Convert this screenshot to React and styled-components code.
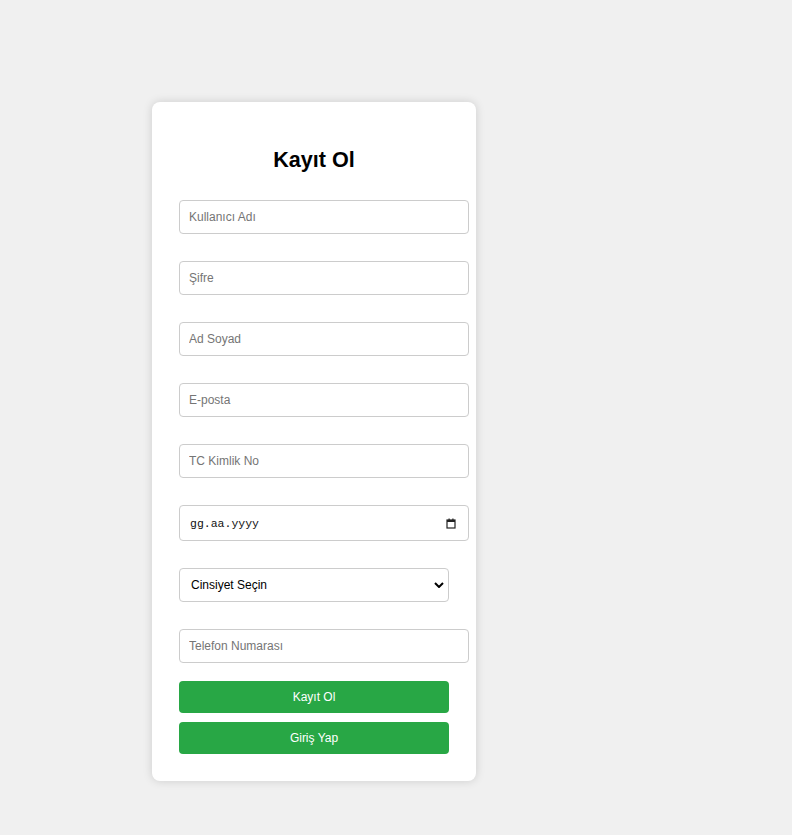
import styled, { createGlobalStyle } from 'styled-components';

const GlobalStyle = createGlobalStyle`
body{
  margin:0;
  background:#f0f0f0;
  font-family:"Liberation Sans", Arial, sans-serif;
}
`;

const Page = styled.div`
min-height:835px;
box-sizing:border-box;
padding:102px 0 0 152px;
`;

const Card = styled.form`
width:324px;
box-sizing:border-box;
padding:27px 27px 27px;
background:#fff;
border-radius:8px;
box-shadow:0 0 10px rgba(0,0,0,0.15);
display:flex;
flex-direction:column;
`;

const Title = styled.h2`
margin:18px 0 28px;
font-size:21.6px;
line-height:25px;
font-weight:bold;
text-align:center;
color:#000;
`;

const Field = styled.input`
width:290px;
height:34px;
box-sizing:border-box;
margin:0 0 ${p => p.last ? '18px' : '27px'};
padding:0 9px;
border:1px solid #ccc;
border-radius:4px;
font-family:"Liberation Sans", Arial, sans-serif;
font-size:12px;
color:#000;
outline:none;
&::placeholder{
  color:#757575;
}
`;

const DateBox = styled.div`
width:290px;
height:36px;
box-sizing:border-box;
margin-bottom:27px;
padding:0 12px 0 10px;
border:1px solid #ccc;
border-radius:4px;
display:flex;
align-items:center;
justify-content:space-between;
font-family:"Liberation Mono", monospace;
font-size:11.5px;
color:#111;
`;

const SelectWrap = styled.div`
position:relative;
width:270px;
margin-bottom:27px;
`;

const Select = styled.select`
width:270px;
height:34px;
box-sizing:border-box;
padding:0 11px;
border:1px solid #ccc;
border-radius:4px;
background:#fff;
appearance:none;
font-family:"Liberation Sans", Arial, sans-serif;
font-size:12px;
color:#000;
`;

const Chevron = styled.svg`
position:absolute;
right:5px;
top:14px;
pointer-events:none;
`;

const Button = styled.button`
width:270px;
height:32px;
margin-bottom:${p => p.gap ? '9px' : '0'};
border:none;
border-radius:4px;
background:#28a745;
color:#fff;
font-family:"Liberation Sans", Arial, sans-serif;
font-size:12px;
cursor:pointer;
`;

const App = () => {
  return (
    <Page>
      <GlobalStyle />
      <Card onSubmit={e => e.preventDefault()}>
        <Title>Kayıt Ol</Title>
        <Field type="text" placeholder="Kullanıcı Adı" />
        <Field type="password" placeholder="Şifre" />
        <Field type="text" placeholder="Ad Soyad" />
        <Field type="email" placeholder="E-posta" />
        <Field type="text" placeholder="TC Kimlik No" />
        <DateBox>
          <span>gg.aa.yyyy</span>
          <svg width="10" height="11" viewBox="0 0 10 11">
            <rect x="1" y="2" width="8" height="8" fill="none" stroke="#222" strokeWidth="1.2" />
            <rect x="1" y="2" width="8" height="2" fill="#222" />
            <rect x="2.5" y="0.5" width="1.2" height="2" fill="#222" />
            <rect x="6.3" y="0.5" width="1.2" height="2" fill="#222" />
          </svg>
        </DateBox>
        <SelectWrap>
          <Select defaultValue="">
            <option value="">Cinsiyet Seçin</option>
            <option value="erkek">Erkek</option>
            <option value="kadin">Kadın</option>
          </Select>
          <Chevron width="10" height="6" viewBox="0 0 10 6">
            <path d="M1 1 L5 5 L9 1" fill="none" stroke="#000" strokeWidth="2" />
          </Chevron>
        </SelectWrap>
        <Field type="tel" placeholder="Telefon Numarası" last />
        <Button type="submit" gap>Kayıt Ol</Button>
        <Button type="button">Giriş Yap</Button>
      </Card>
    </Page>
  );
};

export default App;
